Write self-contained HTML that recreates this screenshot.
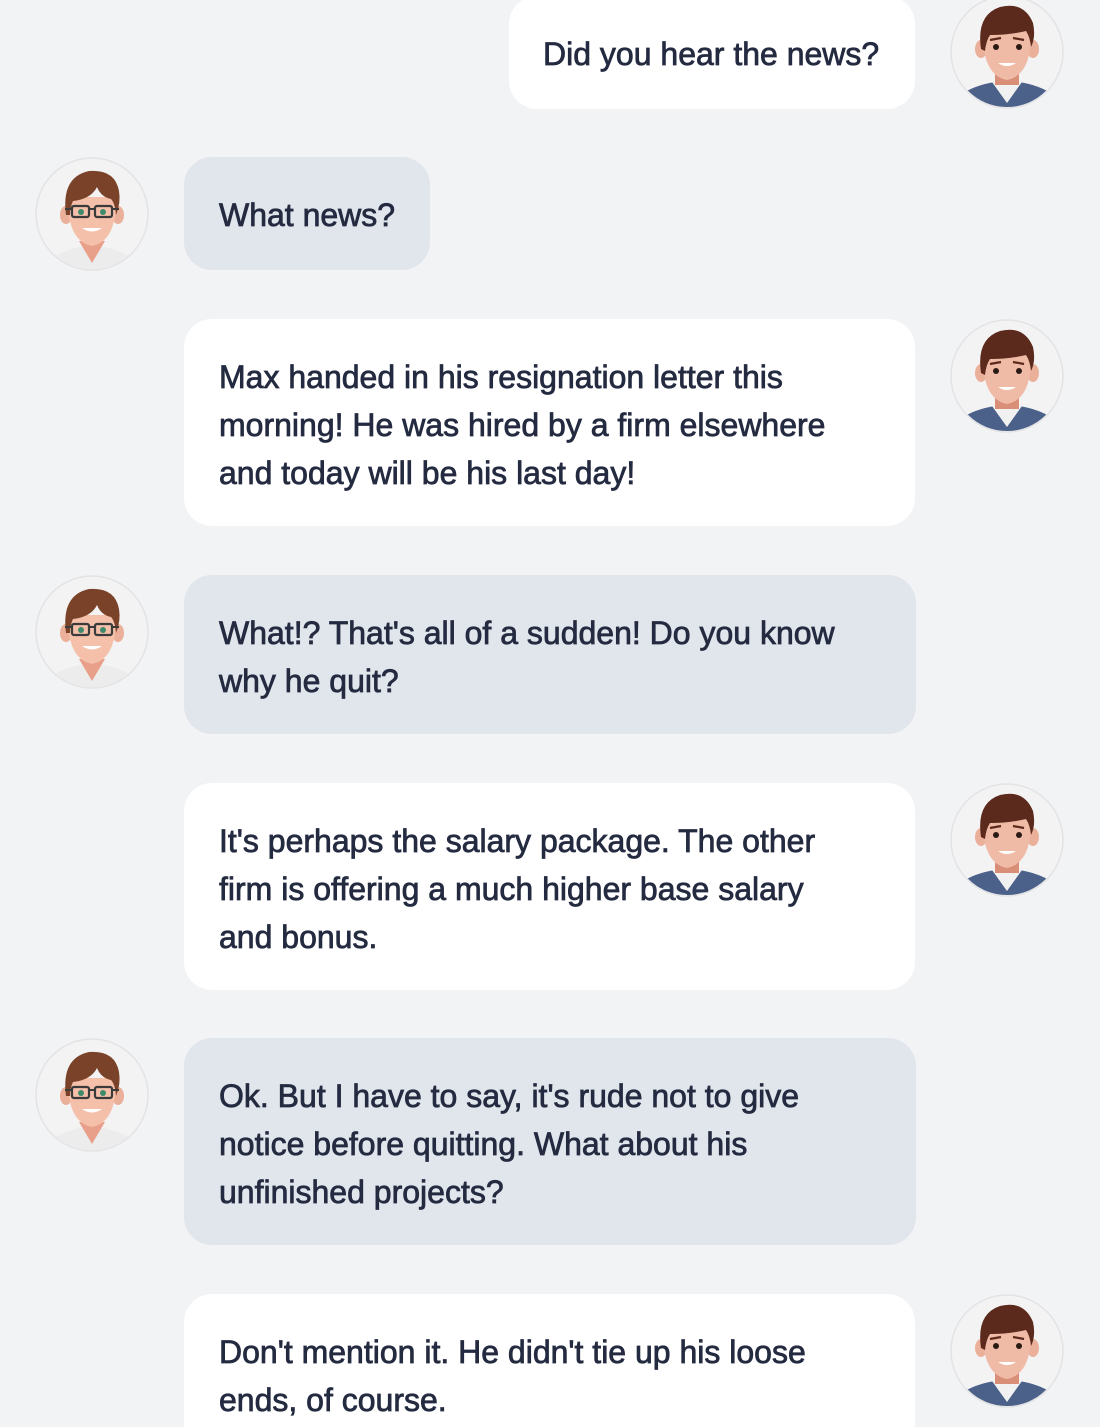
<!DOCTYPE html>
<html><head><meta charset="utf-8"><style>
html,body{margin:0;padding:0;background:#f2f3f5;width:1100px;height:1427px;overflow:hidden;position:relative}
.b{position:absolute;border-radius:28px;font-family:"Liberation Sans",Arial,sans-serif;font-size:32px;line-height:48px;color:#242b40;-webkit-text-stroke:0.75px #242b40;white-space:nowrap;padding:34px 35px 30px;box-sizing:border-box;letter-spacing:0px}
.w{background:#fff}.g{background:#e1e5ec}
.av{position:absolute;width:114px;height:114px}
</style></head><body>
<svg width="0" height="0" style="position:absolute">
<defs>
<clipPath id="cc"><circle cx="57" cy="57" r="55"/></clipPath>
<symbol id="m" viewBox="0 0 114 114">
<circle cx="57" cy="57" r="56" fill="#f3f3f4" stroke="#e3e3e6" stroke-width="1.5"/>
<g clip-path="url(#cc)">
<path d="M0 114 L10 100 Q25 90 45 87 L69 87 Q89 90 104 100 L114 114 Z" fill="#4c6189"/>
<path d="M42 87 L57 108 L72 87 Z" fill="#f1f1f1"/>
<rect x="45" y="70" width="24" height="20" fill="#d98e78"/>
<ellipse cx="31" cy="54" rx="6" ry="9" fill="#eab09a"/>
<ellipse cx="83" cy="54" rx="6" ry="9" fill="#eab09a"/>
<path d="M33 36 Q32 80 57 85 Q82 80 81 36 Z" fill="#f0bba6"/>
<path d="M31 54 Q26 20 50 12 Q74 6 83 28 Q86 42 81 52 Q80 42 76 36 Q60 40 40 40 Q36 46 35 56 Z" fill="#5b2a1c"/>
<circle cx="46" cy="52" r="3" fill="#2a1a14"/><circle cx="69" cy="52" r="3" fill="#2a1a14"/>
<path d="M40 45 L51 43 M63 43 L74 45" stroke="#5b2a1c" stroke-width="2.2"/>
<path d="M48 68 Q57 74 66 68 Z" fill="#fff"/>
</g></symbol>
<symbol id="f" viewBox="0 0 114 114">
<circle cx="57" cy="57" r="56" fill="#f3f3f4" stroke="#e3e3e6" stroke-width="1.5"/>
<g clip-path="url(#cc)">
<path d="M0 114 L12 104 Q26 94 45 90 L69 90 Q88 94 102 104 L114 114 Z" fill="#ececec"/>
<path d="M44 84 L57 106 L70 84 Z" fill="#e8a08a"/>
<ellipse cx="31" cy="58" rx="6" ry="9" fill="#eab09a"/>
<ellipse cx="83" cy="58" rx="6" ry="9" fill="#eab09a"/>
<path d="M33 40 Q32 84 57 89 Q82 84 81 40 Z" fill="#f4c0aa"/>
<path d="M31 58 Q26 20 54 14 Q80 12 84 34 Q86 46 81 58 Q80 46 76 42 Q66 40 62 30 Q56 42 38 44 Q35 50 35 58 Z" fill="#7a4329"/>
<rect x="37" y="49" width="17" height="11" rx="2" fill="none" stroke="#3b3b3b" stroke-width="2.2"/>
<rect x="60" y="49" width="17" height="11" rx="2" fill="none" stroke="#3b3b3b" stroke-width="2.2"/>
<path d="M54 52 L60 52 M30 52 L37 52 M77 52 L84 52" stroke="#3b3b3b" stroke-width="2"/>
<circle cx="46" cy="55" r="3" fill="#3e8a6a"/><circle cx="68" cy="55" r="3" fill="#3e8a6a"/>
<path d="M47 71 Q57 78 67 71 Z" fill="#fff"/>
</g></symbol>
</defs></svg>

<div class="b w" style="left:509px;top:-4px;width:406px;height:113px;padding-left:34px">Did you hear the news?</div>
<svg class="av" style="left:950px;top:-5px"><use href="#m"/></svg>

<svg class="av" style="left:35px;top:157px"><use href="#f"/></svg>
<div class="b g" style="left:184px;top:157px;width:246px;height:113px">What news?</div>

<div class="b w" style="left:184px;top:319px;width:731px;height:207px">Max handed in his resignation letter this<br>morning! He was hired by a firm elsewhere<br>and today will be his last day!</div>
<svg class="av" style="left:950px;top:319px"><use href="#m"/></svg>

<svg class="av" style="left:35px;top:575px"><use href="#f"/></svg>
<div class="b g" style="left:184px;top:575px;width:732px;height:159px">What!? That's all of a sudden! Do you know<br>why he quit?</div>

<div class="b w" style="left:184px;top:783px;width:731px;height:207px">It's perhaps the salary package. The other<br>firm is offering a much higher base salary<br>and bonus.</div>
<svg class="av" style="left:950px;top:783px"><use href="#m"/></svg>

<svg class="av" style="left:35px;top:1038px"><use href="#f"/></svg>
<div class="b g" style="left:184px;top:1038px;width:732px;height:207px">Ok. But I have to say, it's rude not to give<br>notice before quitting. What about his<br>unfinished projects?</div>

<div class="b w" style="left:184px;top:1294px;width:731px;height:133px;border-radius:28px 28px 0 0">Don't mention it. He didn't tie up his loose<br>ends, of course.</div>
<svg class="av" style="left:950px;top:1294px"><use href="#m"/></svg>
</body></html>
